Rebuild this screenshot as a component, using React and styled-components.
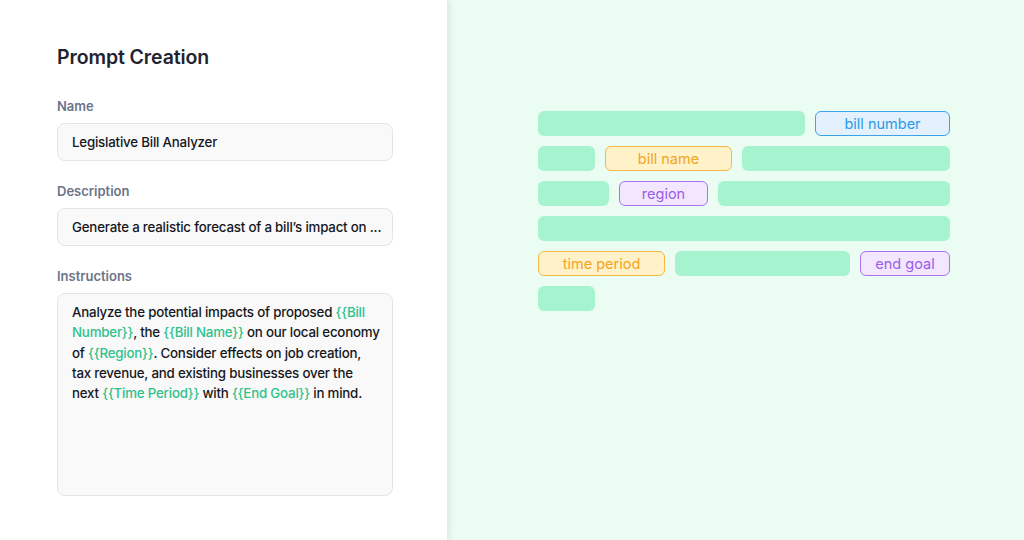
import React from "react";
import styled, { createGlobalStyle } from "styled-components";

const GlobalStyle = createGlobalStyle`
  html, body {
    margin: 0;
    padding: 0;
  }
  body {
    font-family: "Inter", "Noto Sans", sans-serif;
    -webkit-font-smoothing: antialiased;
  }
`;

const Page = styled.div`
  display: flex;
  width: 1024px;
  height: 540px;
  background-color: #ebfcf3;
  overflow: hidden;
`;

const FormPanel = styled.div`
  position: relative;
  z-index: 1;
  width: 447px;
  flex-shrink: 0;
  box-sizing: border-box;
  padding: 44px 54px 0 57px;
  background-color: #ffffff;
  box-shadow: 2px 0 6px rgba(0, 0, 0, 0.09);
`;

const Title = styled.h1`
  margin: 0 0 28px;
  font-size: 19.5px;
  font-weight: 600;
  line-height: 26px;
  color: #1f2430;
  letter-spacing: -0.1px;
`;

const Label = styled.div`
  margin-bottom: 9px;
  font-size: 13px;
  font-weight: 600;
  line-height: 16px;
  color: #6b7489;
`;

const Field = styled.div`
  box-sizing: border-box;
  height: ${(p) => p.$height || 38}px;
  margin-bottom: ${(p) => p.$gap || 0}px;
  padding: ${(p) => (p.$multiline ? "8px 14px" : "0 14px")};
  display: ${(p) => (p.$multiline ? "block" : "flex")};
  align-items: center;
  background-color: #f9f9fa;
  border: 1px solid #e4e5e8;
  border-radius: 8px;
  font-size: 13.3px;
  font-weight: 500;
  letter-spacing: -0.2px;
  line-height: 20.3px;
  color: #15171c;
  white-space: nowrap;
  overflow: hidden;
`;

const Token = styled.span`
  color: #2fc28a;
`;

const PreviewPanel = styled.div`
  flex: 1;
  padding: 111px 0 0 91px;
`;

const Lines = styled.div`
  display: flex;
  flex-direction: column;
  gap: 10px;
  width: 412px;
`;

const Line = styled.div`
  display: flex;
  gap: 10px;
  height: 25px;
`;

const Bar = styled.div`
  flex: ${(p) => (p.$w ? `0 0 ${p.$w}px` : "1")};
  background-color: #a6f3d0;
  border-radius: 6px;
`;

const chipColors = {
  blue: { bg: "#e3f1fe", border: "#3ba2ec", text: "#2a9ae4" },
  amber: { bg: "#fff1c8", border: "#f6b840", text: "#f1a51e" },
  purple: { bg: "#f2e7ff", border: "#a874ee", text: "#9c5ce8" },
};

const Chip = styled.div`
  flex: ${(p) => (p.$w ? `0 0 ${p.$w}px` : "1")};
  box-sizing: border-box;
  display: flex;
  align-items: center;
  justify-content: center;
  background-color: ${(p) => chipColors[p.$tone].bg};
  border: 1.5px solid ${(p) => chipColors[p.$tone].border};
  border-radius: 6px;
  color: ${(p) => chipColors[p.$tone].text};
  font-size: 14.5px;
  font-weight: 400;
`;

export default function App() {
  return (
    <>
      <GlobalStyle />
      <Page>
        <FormPanel>
          <Title>Prompt Creation</Title>
          <Label>Name</Label>
          <Field $gap={22}>Legislative Bill Analyzer</Field>
          <Label>Description</Label>
          <Field $gap={22}>
            Generate a realistic forecast of a bill’s impact on ...
          </Field>
          <Label>Instructions</Label>
          <Field $multiline $height={203}>
            Analyze the potential impacts of proposed <Token>{"{{Bill"}</Token>
            <br />
            <Token>{"Number}}"}</Token>, the <Token>{"{{Bill Name}}"}</Token> on
            our local economy
            <br />
            of <Token>{"{{Region}}"}</Token>. Consider effects on job creation,
            <br />
            tax revenue, and existing businesses over the
            <br />
            next <Token>{"{{Time Period}}"}</Token> with{" "}
            <Token>{"{{End Goal}}"}</Token> in mind.
          </Field>
        </FormPanel>
        <PreviewPanel>
          <Lines>
            <Line>
              <Bar />
              <Chip $tone="blue" $w={135}>bill number</Chip>
            </Line>
            <Line>
              <Bar $w={57} />
              <Chip $tone="amber" $w={127}>bill name</Chip>
              <Bar />
            </Line>
            <Line>
              <Bar $w={71} />
              <Chip $tone="purple" $w={89}>region</Chip>
              <Bar />
            </Line>
            <Line>
              <Bar />
            </Line>
            <Line>
              <Chip $tone="amber" $w={127}>time period</Chip>
              <Bar />
              <Chip $tone="purple" $w={90}>end goal</Chip>
            </Line>
            <Line>
              <Bar $w={57} />
            </Line>
          </Lines>
        </PreviewPanel>
      </Page>
    </>
  );
}
